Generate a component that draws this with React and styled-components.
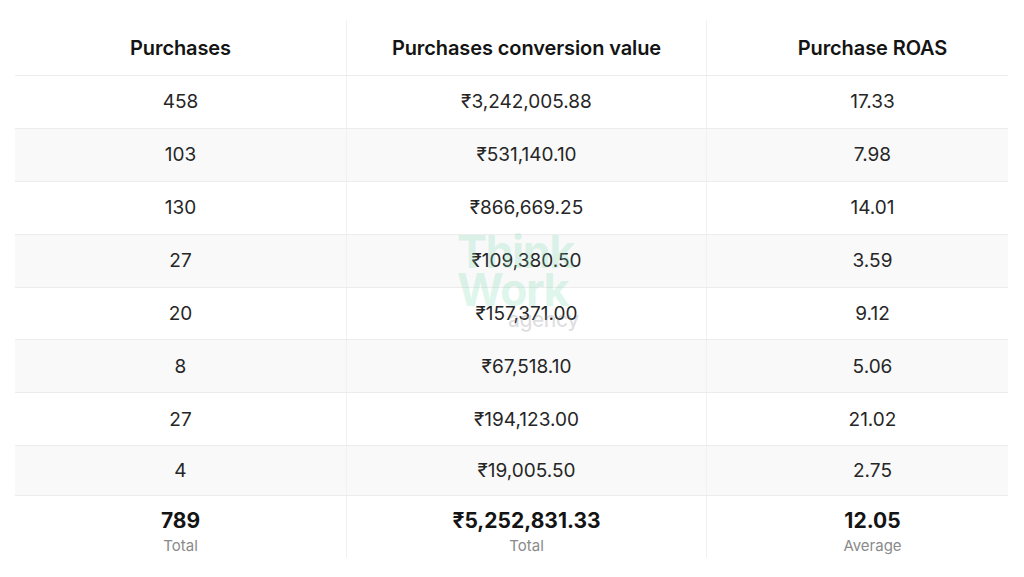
import styled, { createGlobalStyle } from "styled-components"

const Global = createGlobalStyle`
    body {
        margin: 0;
        background: #ffffff;
        font-family: Inter, "Noto Sans", "DejaVu Sans", sans-serif;
        color: #1f1f1f;
    }
`

const Page = styled.div`
    padding: 20px 0 0 15px;
    position: relative;
`
const Table = styled.div`
    width: 993px;
    display: flex;
    flex-direction: column;
`
const Row = styled.div`
    display: grid;
    grid-template-columns: 332px 360px 301px;
    height: ${p => p.$h}px;
    background: ${p => (p.$shade ? "#f9f9f9" : "#ffffff")};
    border-bottom: ${p => (p.$line ? "1px solid #ececec" : "none")};
    box-sizing: border-box;
`
const Cell = styled.div`
    display: flex;
    flex-direction: column;
    align-items: center;
    justify-content: center;
    border-right: ${p => (p.$last ? "none" : "1px solid #f1f1f1")};
    padding-left: ${p => (p.$last ? "30px" : "0")};
    font-size: ${p => (p.$head ? "20px" : "19px")};
    font-weight: ${p => (p.$head ? 600 : 400)};
    letter-spacing: ${p => (p.$head ? "-0.1px" : "0")};
    color: ${p => (p.$head ? "#141414" : "#262626")};
`
const Big = styled.div`
    font-size: 21px;
    font-weight: 700;
    color: #141414;
    line-height: 24px;
    margin-top: 10px;
`
const Note = styled.div`
    font-size: 15px;
    color: #8a8a8a;
    line-height: 20px;
    margin-top: 3px;
`
const Mark = styled.div`
    position: absolute;
    left: 457px;
    top: 233px;
    pointer-events: none;
    font-family: Inter, "Noto Sans", sans-serif;
    font-weight: 700;
    font-size: 45px;
    line-height: 38px;
    letter-spacing: -1.5px;
    color: rgba(110, 215, 175, 0.22);
`
const MarkSmall = styled.div`
    font-size: 21px;
    line-height: 22px;
    font-weight: 500;
    letter-spacing: -0.5px;
    color: rgba(140, 140, 150, 0.28);
    padding-left: 51px;
`

const rows = [
    ["458", "₹3,242,005.88", "17.33"],
    ["103", "₹531,140.10", "7.98"],
    ["130", "₹866,669.25", "14.01"],
    ["27", "₹109,380.50", "3.59"],
    ["20", "₹157,371.00", "9.12"],
    ["8", "₹67,518.10", "5.06"],
    ["27", "₹194,123.00", "21.02"],
    ["4", "₹19,005.50", "2.75"],
]

const totals = [
    ["789", "Total"],
    ["₹5,252,831.33", "Total"],
    ["12.05", "Average"],
]

export default function App() {
  return (
    <Page>
        <Global />
        <Table>
            <Row $h={56} $line>
                <Cell $head>Purchases</Cell>
                <Cell $head>Purchases conversion value</Cell>
                <Cell $head $last>Purchase ROAS</Cell>
            </Row>
            {rows.map((r, i) => (
                <Row key={i} $h={i === 7 ? 50 : 52.9} $shade={i % 2 === 1} $line>
                    {r.map((v, j) => (
                        <Cell key={j} $last={j === 2}>{v}</Cell>
                    ))}
                </Row>
            ))}
            <Row $h={62}>
                {totals.map(([v, n], j) => (
                    <Cell key={j} $last={j === 2}>
                        <Big>{v}</Big>
                        <Note>{n}</Note>
                    </Cell>
                ))}
            </Row>
        </Table>
        <Mark>
            Think<br />Work
            <MarkSmall>agency</MarkSmall>
        </Mark>
    </Page>
  )
}
